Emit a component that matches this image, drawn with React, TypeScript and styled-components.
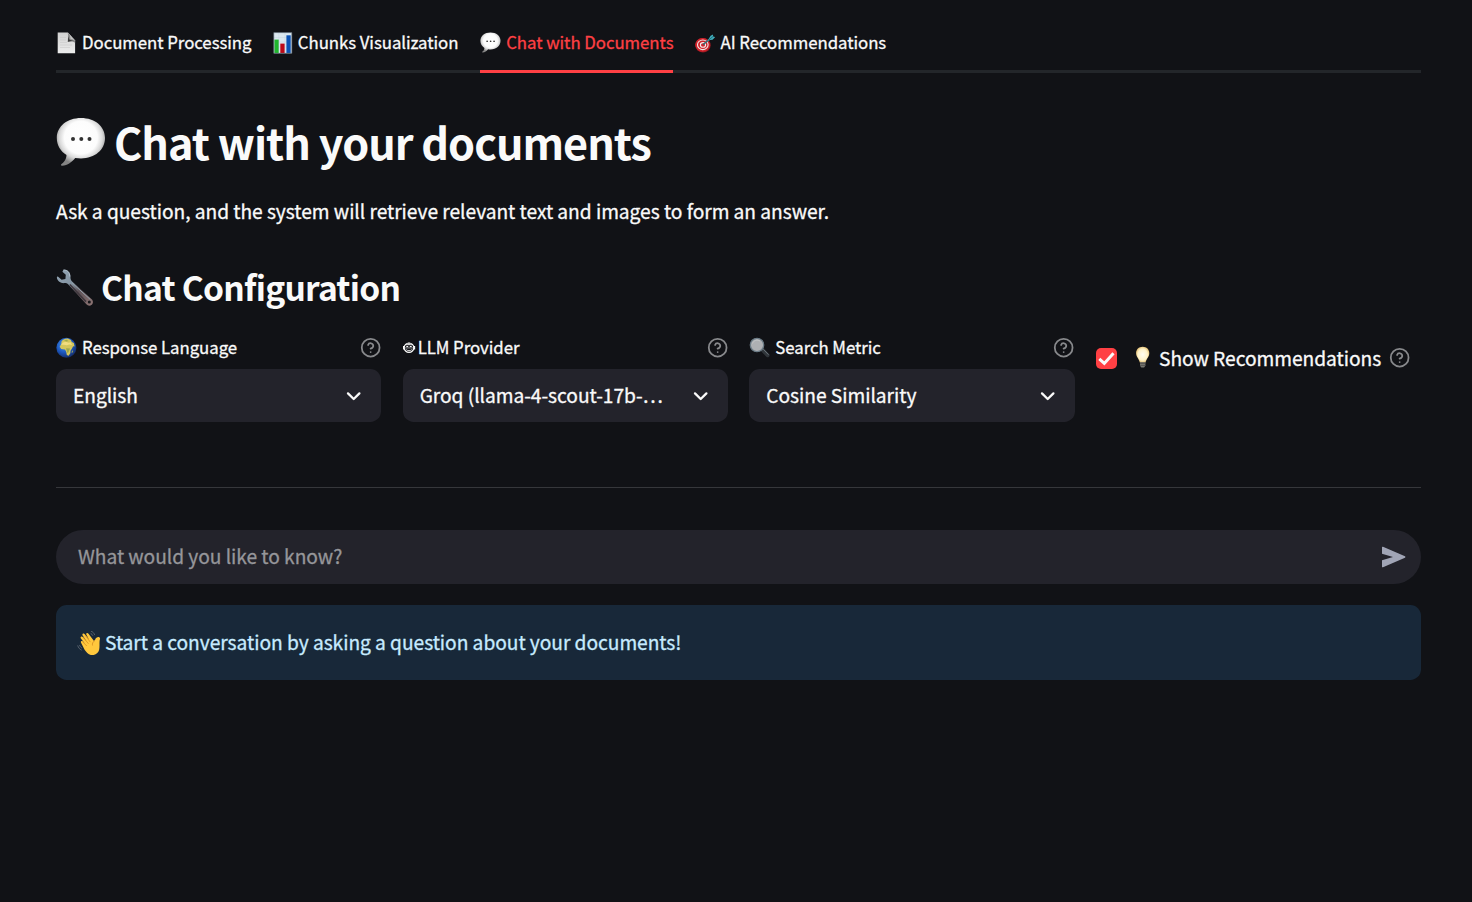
import React from 'react';
import styled, { createGlobalStyle } from 'styled-components';

const GlobalStyle = createGlobalStyle`
  * { box-sizing: border-box; }
  html, body { margin: 0; background: #111216; }
  body {
    font-family: "Noto Sans CJK SC", "Noto Sans", sans-serif;
    color: #fafafa;
    -webkit-font-smoothing: antialiased;
  }
`;

const Page = styled.main`
  display: flex;
  flex-direction: column;
  width: 1472px;
  height: 902px;
  padding: 16px 50.67px 0 56px;
  overflow: hidden;
  background: #111216;
`;

const Text = styled.span<{ $size: number }>`
  font-size: ${p => p.$size}px;
  font-weight: 400;
  letter-spacing: -0.04px;
  line-height: 1;
  white-space: nowrap;
  -webkit-text-stroke: 0.3px currentColor;
`;

const HeadingText = styled.span<{ $size: number; $track: number }>`
  font-size: ${p => p.$size}px;
  font-weight: 700;
  letter-spacing: ${p => p.$track}px;
  line-height: 1;
  white-space: nowrap;
`;

const TabList = styled.nav`
  display: flex;
  gap: 21.33px;
  height: 57px;
  box-shadow: inset 0 -3px #23262a;
`;

const Tab = styled.button<{ $active?: boolean; $width: number }>`
  display: flex;
  align-items: center;
  gap: 5px;
  width: ${p => p.$width}px;
  height: 57px;
  padding: 0 0 4px;
  border: 0;
  background: none;
  font-family: inherit;
  color: ${p => (p.$active ? '#ff4044' : '#fafafa')};
  box-shadow: ${p => (p.$active ? 'inset 0 -3px #ff4044' : 'none')};
`;

const Title = styled.h1`
  display: flex;
  align-items: center;
  gap: 8px;
  height: 60px;
  margin: 39px 0 0;
`;

const Intro = styled.p`
  display: flex;
  align-items: center;
  height: 32px;
  margin: 24px 0 0;
`;

const Subtitle = styled.h2`
  display: flex;
  align-items: center;
  gap: 7px;
  height: 50px;
  margin: 34px 0 0;
`;

const Columns = styled.section`
  display: grid;
  grid-template-columns: repeat(4, 1fr);
  gap: 21.33px;
  height: 88px;
  margin-top: 22px;
`;

const Field = styled.div`
  display: flex;
  flex-direction: column;
  min-width: 0;
`;

const Label = styled.label<{ $gap?: number }>`
  display: flex;
  align-items: center;
  gap: ${p => p.$gap ?? 5}px;
  height: 27px;
  margin-bottom: 8px;
  svg:last-child { margin-left: auto; }
`;

const SelectBox = styled.div`
  display: flex;
  align-items: center;
  justify-content: space-between;
  height: 53px;
  padding: 0 16px 0 17px;
  border-radius: 10.67px;
  background: #23232b;
`;

const CheckRow = styled.label`
  display: flex;
  align-items: center;
  height: 22px;
  margin-top: 13px;
`;

const CheckBox = styled.span`
  display: flex;
  flex: none;
  width: 21px;
  height: 21px;
  margin-right: 16px;
  border-radius: 5px;
  background: #ff4044;
`;

const CheckText = styled.span`
  display: flex;
  flex: none;
  align-items: center;
  gap: 5px;
  width: 256px;
  ${Text} { padding-top: 2px; }
`;

const Divider = styled.hr`
  width: 100%;
  height: 1px;
  margin: 65px 0 0;
  border: 0;
  background: #36373b;
`;

const ChatInput = styled.div`
  display: flex;
  align-items: center;
  justify-content: space-between;
  height: 54px;
  margin-top: 42px;
  padding: 0 14px 0 22px;
  border-radius: 27px;
  background: #23232b;
  color: #96969a;
`;

const Notice = styled.div`
  display: flex;
  align-items: center;
  gap: 4px;
  height: 75px;
  margin-top: 21px;
  padding: 0 21px;
  border-radius: 10.67px;
  background: #182839;
  color: #c7ebff;
`;

const Icon = styled.svg`
  display: block;
  flex: none;
`;

const PageIcon = () => (
  <Icon width="21" height="22" viewBox="0 0 21 22">
    <defs>
      <linearGradient id="paper" x1="0" y1="0" x2="0" y2="1">
        <stop offset="0" stopColor="#d2d2d2" /><stop offset="1" stopColor="#ececec" />
      </linearGradient>
    </defs>
    <path d="M1.700.6h10.200l7.200 8v12.600H1.700z" fill="url(#paper)" />
    <path d="M11.700.8c.7 2.300.3 5.700 0 9.200 2.400-1 5.600-.7 7.400.8V8.600z" fill="#8a8a8a" />
    <path d="M11.900 4c.4 1.500.2 4 0 5.700 2.400-.9 4.700-1 6.500-.5l-4.900-1.500z" fill="#3c3c3c" />
    <path d="M12.200 1 19 8.600c-1.500-1-3-1.300-4.600-1.300.2-2.700-.5-4.700-2.200-6.300z" fill="#c4c4c4" />
    <path d="M4 5.500h6M4 8h6M4 10.500h7M4 13h12M4 15.500h10" stroke="#cacaca" strokeWidth=".6" />
  </Icon>
);

const ChartIcon = () => (
  <Icon width="20" height="22" viewBox="0 0 20 22">
    <path d="M.8.600h18v20.700H.8z" fill="#dce8f0" />
    <path d="M1 5.500h17.500M1 10h17.500M1 15h17.500M5.800 1v20M12 1v20" stroke="#c6d7e3" strokeWidth=".5" />
    <path d="M1.400 7.600h4.300V21H1.400z" fill="#20b52d" />
    <path d="M7.300 11.600h4.300V21H7.300z" fill="#bd0918" />
    <path d="M13.400 3.300h4.300V21h-4.300z" fill="#0b52b5" />
    <path d="M.8.600h18v20.700H.8z" fill="none" stroke="#66747f" strokeWidth=".6" />
  </Icon>
);

const BubbleIcon = ({ size, id }: { size: number; id: string }) => (
  <Icon width={size} height={size} viewBox="0 0 50 50">
    <defs>
      <radialGradient id={id} cx=".5" cy=".41" r=".57">
        <stop offset="0" stopColor="#fff" /><stop offset=".6" stopColor="#fcfcfc" />
        <stop offset=".78" stopColor="#d9d9d9" /><stop offset="1" stopColor="#848484" />
      </radialGradient>
    </defs>
    <path d="M25 1C11.300 1 .8 9.300.8 21c0 7.500 4 13.600 9.700 17-.2 4.500-2.800 7.700-5.200 9.300-.7.6-.3 1.600.8 1.500 5.600-.4 10-4.100 13.100-7.900 1.900.3 3.800.5 5.800.5 13.900 0 24-8.600 24-20.400S38.800 1 25 1z" fill={`url(#${id})`} />
    <circle cx="17" cy="22" r="2" fill="#333" /><circle cx="25.300" cy="22" r="2" fill="#333" /><circle cx="33.500" cy="22" r="2" fill="#333" />
  </Icon>
);

const TargetIcon = () => (
  <Icon width="21" height="22" viewBox="0 .7 21 22">
    <ellipse cx="9" cy="14" rx="7.700" ry="7.300" fill="#8d1820" />
    <ellipse cx="8.600" cy="13.500" rx="7.400" ry="6.900" fill="#cf222b" />
    <ellipse cx="8.800" cy="13.500" rx="5.300" ry="4.800" fill="none" stroke="#f2e4e3" strokeWidth="1.100" />
    <ellipse cx="9" cy="13.600" rx="2.600" ry="2.300" fill="#d2212b" stroke="#f5eded" strokeWidth="1.100" />
    <path d="m9 13.400 6-5" stroke="#3b6970" strokeWidth="1.500" />
    <path d="m13 10.500 3.600-6.100 2.400-1.200.1 2 2.200.5-2.800 2.800-2.600.2z" fill="#40aebc" />
    <path d="m14.500 8.900 4.500-3.700" stroke="#1e6675" strokeWidth=".9" />
  </Icon>
);

const WrenchIcon = () => (
  <Icon width="38" height="38" viewBox="0 0 38 38">
    <defs>
      <linearGradient id="steel" x1="0" y1="0" x2="1" y2="1">
        <stop offset="0" stopColor="#93a5b5" /><stop offset=".4" stopColor="#8393a1" />
        <stop offset=".6" stopColor="#5e5358" /><stop offset="1" stopColor="#8f7574" />
      </linearGradient>
    </defs>
    <path d="M7.500 1.700 6.400 3.800l3.400 3-.4 4.100-3.800.9L1.600 8.200.8 9.700c.9 3.600 4.200 5.800 7.500 5.400 2.100-.1 3.300.5 4.500 2L30.400 36.300c1.500 1.700 3.700 1.800 5.300.5 1.500-1.300 1.700-3.500.3-5.300L16.100 13.500c-1.500-1.500-1.700-3-1.600-4.800C14.500 4.500 11.400 1.200 7.500 1.700z" fill="url(#steel)" />
    <path d="M13.800 16.500 30 33.700" stroke="#40383e" strokeWidth="1.700" />
    <path d="m16 14.800 18.300 16.700" stroke="#95a2ad" strokeWidth="1" />
    <path d="M7.500 2c4-.3 6.300 2.500 6.300 6.500" fill="none" stroke="#bac8d3" strokeWidth=".8" />
    <circle cx="33.300" cy="34" r="1.500" fill="#17171b" />
  </Icon>
);

const GlobeIcon = () => (
  <Icon width="21" height="22" viewBox="0 0 21 22">
    <defs>
      <radialGradient id="ocean" cx=".4" cy=".35" r=".65">
        <stop offset="0" stopColor="#4f9df0" /><stop offset=".6" stopColor="#1c58c0" /><stop offset="1" stopColor="#15306f" />
      </radialGradient>
    </defs>
    <circle cx="10.400" cy="10.700" r="10" fill="url(#ocean)" />
    <path d="M5.500 4.500c1.200-2 4-3.200 6.500-3l2.800 1.400 1 2 2 1.200.8 3.500-1.500-.3-1.100 2.300-1.500 2.200-.2 2.400-1.700 2.500-1.800-.6-.6-3.400-1.200-2.300-3.800-.3-1.500-2.300 1.600-2.800z" fill="#d4c65c" />
    <path d="m5 7.700 2-2.300 3-.7 2.500 1 2.200-.4 1.300 2.600-2.700-.5-2.500.8-3-.4z" fill="#f1dd80" />
    <path d="m8 3.700 2.500-1 2 1.200-2 .7zM10 11.200l4 .2-1.600 4-1 .6z" fill="#9ca84c" />
    <path d="m15.500 15.200 1-2 .6.800-.9 1.900z" fill="#a9ae57" />
  </Icon>
);

const RobotIcon = () => (
  <Icon width="13" height="13" viewBox="0.600 0 13 13" fill="none" stroke="#fafafa">
    <ellipse cx="6.600" cy="6.700" rx="4.800" ry="4.700" strokeWidth="1.200" />
    <path d="M1.100 4.900v3.600M12.100 4.900v3.600" strokeWidth="1.300" />
    <path d="M3.300 3.700h6.600M3.900 8.600c1.500 1.500 3.900 1.500 5.400 0" strokeWidth=".9" />
    <path d="M2 6.900h9.200" strokeWidth=".6" />
    <path d="M3.900 5.500h1.900M7.400 5.500h1.900M6.600 1.800v2" strokeWidth="1.100" />
  </Icon>
);

const LensIcon = () => (
  <Icon width="22" height="22" viewBox="0 0 22 22">
    <path d="m12.500 12.200 2-1.400 6 6.700c.9 1.300-1.500 3.600-2.900 2.500l-6-6.200z" fill="#30353a" />
    <path d="m14.200 12.200 5.300 5.500" stroke="#79838a" strokeWidth=".8" />
    <circle cx="8" cy="8" r="6.700" fill="#aeb0b3" stroke="#6b7b86" strokeWidth="1.300" />
    <path d="M3.500 6.500C4.500 3.500 8 2.300 11 4" fill="none" stroke="#c5c7c9" strokeWidth="1" />
  </Icon>
);

const BulbIcon = () => (
  <Icon width="21" height="24" viewBox="0 0 21 24">
    <defs>
      <radialGradient id="glow" cx=".5" cy=".5" r=".6">
        <stop offset="0" stopColor="#fffdf2" /><stop offset=".6" stopColor="#fff2c7" /><stop offset="1" stopColor="#d9a94e" />
      </radialGradient>
    </defs>
    <path d="M9.700.8c-4 0-6.600 2.800-6.600 6.400 0 3.800 2.900 5.400 3.700 9.200h5.800c.8-3.800 3.700-5.400 3.700-9.200 0-3.600-2.600-6.400-6.600-6.400z" fill="url(#glow)" />
    <path d="M7 16.200h5.400v3.600l-1.300 1.600H8.300L7 19.800z" fill="#77766f" />
    <path d="M7 17.400h5.400M7 19.400h5.400" stroke="#444" strokeWidth=".7" />
  </Icon>
);

const WaveIcon = () => (
  <Icon width="24" height="24" viewBox="0 .7 24 24">
    <path d="M4.200 12.600c-1-1.400.5-2.500 1.600-1.400l2 2L3.900 8.300C2.800 6.700 4.600 5.400 5.900 6.800l3.500 4-3.700-5.500c-1-1.600.8-2.800 2.100-1.400l4.100 5-2.500-4.500c-.7-1.600 1.100-2.400 2.100-1l5.500 7.200 1.400-1.600c.3-2 4.500-3.500 4.700-.5-1.100 2.500-.2 7.500-.9 10.600-.6 3-3.300 5.400-6.600 5.800-3.300.2-6.300-2.900-8-5.500z" fill="#ffc83d" />
    <path d="m6 6.900 5.500 6.600M8 4.600l5.300 7.200M5.600 11.500l4.200 4.200M18 10.200c-2.300 1.300-3 3.200-2.400 5" fill="none" stroke="#d78b22" strokeWidth=".8" />
    <path d="M14.200.9c1.700.7 2.800 1.900 3.400 3.500M14 3.300c.8.400 1.300 1 1.700 1.800M.8 15.500c.6 2 1.700 3.300 3.500 4.200M2.600 15c.4 1.200 1.100 2 2.100 2.600" fill="none" stroke="#5c6872" strokeWidth=".9" strokeLinecap="round" />
  </Icon>
);

const HelpIcon = () => (
  <Icon width="21.330" height="21.330" viewBox="0 0 24 24" fill="none" stroke="#88898c" strokeWidth="2" strokeLinecap="round" strokeLinejoin="round">
    <circle cx="12" cy="12" r="10" />
    <path d="M9.090 9a3 3 0 0 1 5.830 1c0 2-3 3-3 3" />
    <path d="M12 17h.01" />
  </Icon>
);

const Chevron = () => (
  <Icon width="22" height="22" viewBox="0 0 22 22" fill="none" stroke="#fafafa" strokeWidth="2.300" strokeLinecap="round" strokeLinejoin="round">
    <path d="m5 8.400 5.700 5.600 5.700-5.600" />
  </Icon>
);

const SendIcon = () => (
  <Icon width="26" height="22" viewBox="0 0 26 22">
    <path d="M1 1.200Q1 .4 2 .8L24 10.200q1 .8 0 1.600L2 21.200q-1 .4-1-.4v-6.600L12 11 1 7.800z" fill="#a1a5b6" />
  </Icon>
);

const fields = [
  { icon: <GlobeIcon />, label: 'Response Language', value: 'English', gap: 5 },
  { icon: <RobotIcon />, label: 'LLM Provider', value: 'Groq (llama-4-scout-17b-…', gap: 2 },
  { icon: <LensIcon />, label: 'Search Metric', value: 'Cosine Similarity', gap: 4 },
];

export default function App() {
  return (
    <>
      <GlobalStyle />
      <Page>
        <TabList>
          <Tab $width={195.500}><PageIcon /><Text $size={16.800}>Document Processing</Text></Tab>
          <Tab $width={186}><ChartIcon /><Text $size={16.800}>Chunks Visualization</Text></Tab>
          <Tab $width={193} $active><BubbleIcon size={21} id="bubbleSmall" /><Text $size={16.800}>Chat with Documents</Text></Tab>
          <Tab $width={192}><TargetIcon /><Text $size={16.800}>AI Recommendations</Text></Tab>
        </TabList>
        <Title><BubbleIcon size={50} id="bubbleLarge" /><HeadingText $size={43.200} $track={-1}>Chat with your documents</HeadingText></Title>
        <Intro><Text $size={19.200}>Ask a question, and the system will retrieve relevant text and images to form an answer.</Text></Intro>
        <Subtitle><WrenchIcon /><HeadingText $size={33.600} $track={-0.760}>Chat Configuration</HeadingText></Subtitle>
        <Columns>
          {fields.map(f => (
            <Field key={f.label}>
              <Label $gap={f.gap}>{f.icon}<Text $size={16.800}>{f.label}</Text><HelpIcon /></Label>
              <SelectBox><Text $size={19.200}>{f.value}</Text><Chevron /></SelectBox>
            </Field>
          ))}
          <Field>
            <CheckRow>
              <CheckBox>
                <Icon width="21" height="21" viewBox="0 0 21 21" fill="none" stroke="#fafafa" strokeWidth="3">
                  <path d="m3.300 10.900 5 4.500L17.500 5.200" />
                </Icon>
              </CheckBox>
              <CheckText><BulbIcon /><Text $size={19.200}>Show Recommendations</Text></CheckText>
              <HelpIcon />
            </CheckRow>
          </Field>
        </Columns>
        <Divider />
        <ChatInput><Text $size={19.200}>What would you like to know?</Text><SendIcon /></ChatInput>
        <Notice><WaveIcon /><Text $size={19.200}>Start a conversation by asking a question about your documents!</Text></Notice>
      </Page>
    </>
  );
}
